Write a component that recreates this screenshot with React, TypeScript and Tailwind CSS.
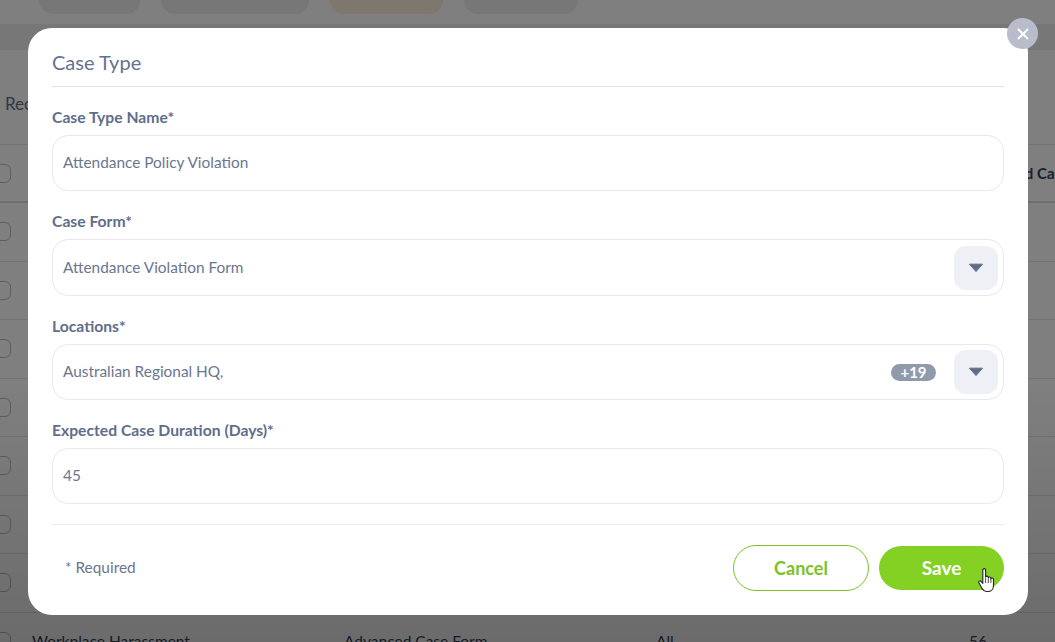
import { X } from "lucide-react";

const ROWS = [0, 1, 2, 3, 4, 5, 6];
const FIELD_LABEL = "text-[15.7px] font-bold leading-5 text-[#616d8a]";
const FIELD_BOX =
  "flex h-[56px] items-center rounded-2xl border border-[#e8e8ef] pl-[10px] pr-[5px] text-[15.4px] text-[#6b7691]";

function DropButton() {
  return (
    <span className="flex h-[44px] w-[44px] items-center justify-center rounded-xl bg-[#eff0f5]">
      <svg width="14" height="10" viewBox="0 0 14 10" className="text-[#616d8a]">
        <path d="M0.5 1.2 H13.5 L7 8.6 Z" fill="currentColor" stroke="currentColor" strokeLinejoin="round" />
      </svg>
    </span>
  );
}

function HandCursor() {
  return (
    <svg width="18" height="25" viewBox="0 0 18 25" className="absolute right-[8px] bottom-[-3px]">
      <path
        d="M4.800 2c0-1.800 2.800-1.800 2.800 0v7.200c.2-1.500 2.500-1.500 2.700 0v.8c.2-1.400 2.400-1.400 2.600.1v.8c.3-1.300 2.500-1.100 2.600.3v5.800c0 3.300-1.700 6.500-5 6.500H8.400c-2 0-3-1-4-2.600L1 14.900c-.9-1.600 1.100-2.700 2.200-1.400l1.600 1.900Z"
        fill="#fff"
        stroke="#1f2430"
        strokeWidth="1.100"
        strokeLinejoin="round"
      />
      <path d="M7.600 10v5M10.300 10.500v4.500M12.900 11v4" stroke="#1f2430" strokeWidth="0.800" fill="none" />
    </svg>
  );
}

function BackgroundPage() {
  return (
    <div className="h-[642px] overflow-hidden bg-white font-['Lato','Noto_Sans',sans-serif] text-[#33415c]">
      <div className="flex h-[24px] items-start gap-[21px] pl-[39px]">
        <div className="h-[14px] w-[101px] rounded-b-2xl bg-[#eeeeee]" />
        <div className="h-[14px] w-[148px] rounded-b-2xl bg-[#eeeeee]" />
        <div className="h-[14px] w-[113px] rounded-b-2xl bg-[#fdeedd]" />
        <div className="h-[14px] w-[114px] rounded-b-2xl bg-[#eeeeee]" />
      </div>
      <div className="h-[26px] bg-[#efefef]" />
      <div className="flex h-[95px] items-start border-b border-[#e4e4e4] pt-[41px] pl-[5px] text-[17px] text-[#616d8a]">
        Recent Case Types
      </div>
      <div className="relative flex h-[58px] items-center border-b-2 border-[#dddddd]">
        <span className="ml-[-8px] h-[19px] w-[19px] rounded-md border border-[#bbbbc4]" />
        <span className="absolute left-[973px] whitespace-nowrap text-[15px] font-bold">Assigned Cases</span>
      </div>
      {ROWS.map((row) => (
        <div key={row} className="flex h-[58.5px] items-center border-b border-[#e4e4e4]">
          <span className="ml-[-8px] h-[19px] w-[19px] rounded-md border border-[#bbbbc4]" />
        </div>
      ))}
      <div className="relative flex h-[58px] items-center text-[15.5px] leading-5">
        <span className="ml-[-8px] h-[19px] w-[19px] rounded-md border border-[#bbbbc4]" />
        <div className="absolute top-[18px] left-0 grid w-full grid-cols-[312px_312px_313px_1fr] pl-[32px]">
          <span>Workplace Harassment</span>
          <span>Advanced Case Form</span>
          <span>All</span>
          <span>56</span>
        </div>
      </div>
    </div>
  );
}

export default function App() {
  return (
    <div className="relative h-[642px] w-[1055px] overflow-hidden">
      <BackgroundPage />
      <div className="absolute inset-0 bg-gradient-to-b from-[#00000080] from-60% to-[#00000094] font-['Lato','Noto_Sans',sans-serif]">
        <div className="relative mt-[28px] ml-[28px] flex h-[587px] w-[1000px] flex-col rounded-3xl bg-white px-[24px]">
          <button className="absolute top-[-10px] right-[-10px] flex h-[31px] w-[31px] items-center justify-center rounded-full bg-[#b9bdcb] text-white">
            <X size={18} strokeWidth={2.5} />
          </button>

          <h2 className="flex h-[59px] items-center border-b border-[#e2e2ea] pt-[20px] pb-[10px] text-[20px] leading-7 text-[#66718f]">
            Case Type
          </h2>

          <label className={`${FIELD_LABEL} mt-[20px] mb-[8px]`}>Case Type Name*</label>
          <div className={FIELD_BOX}>Attendance Policy Violation</div>

          <label className={`${FIELD_LABEL} mt-[20px] mb-[8px]`}>Case Form*</label>
          <div className={`${FIELD_BOX} h-[57px] justify-between`}>
            <span>Attendance Violation Form</span>
            <DropButton />
          </div>

          <label className={`${FIELD_LABEL} mt-[20px] mb-[8px]`}>Locations*</label>
          <div className={`${FIELD_BOX} justify-between`}>
            <span>Australian Regional HQ,</span>
            <div className="flex items-center gap-[18px]">
              <span className="flex h-[17px] w-[45px] items-center justify-center rounded-full bg-[#919aab] text-[15px] font-bold text-white">
                +19
              </span>
              <DropButton />
            </div>
          </div>

          <label className={`${FIELD_LABEL} mt-[20px] mb-[8px]`}>Expected Case Duration (Days)*</label>
          <div className={FIELD_BOX}>45</div>

          <div className="mt-[20px] flex items-center justify-between border-t border-[#eeeeee] pt-[20px]">
            <span className="pl-[13px] text-[15.4px] text-[#6b7691]">* Required</span>
            <div className="flex items-center gap-[10px]">
              <button className="flex h-[46px] w-[136px] items-center justify-center rounded-full border border-[#7cc225] text-[18px] font-bold text-[#7cc225]">
                Cancel
              </button>
              <button className="relative flex h-[44px] w-[125px] items-center justify-center rounded-full bg-[#84d124] text-[19px] font-bold text-white">
                Save
                <HandCursor />
              </button>
            </div>
          </div>
        </div>
      </div>
    </div>
  );
}
